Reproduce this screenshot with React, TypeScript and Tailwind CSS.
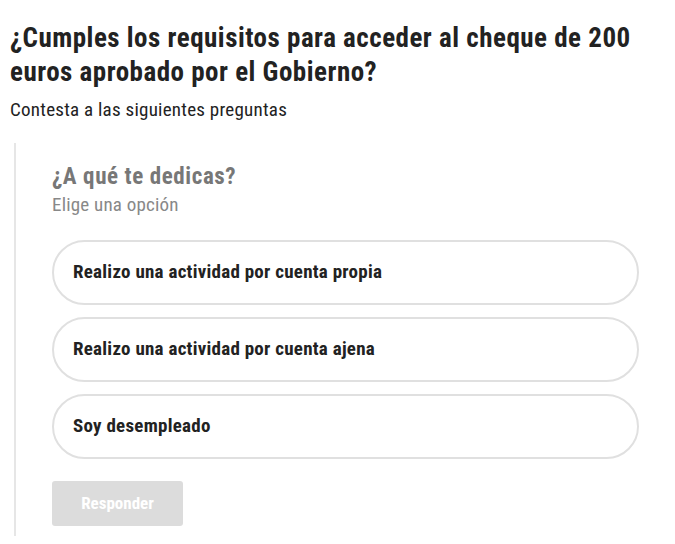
const options = [
  "Realizo una actividad por cuenta propia",
  "Realizo una actividad por cuenta ajena",
  "Soy desempleado",
];

export default function App() {
  return (
    <div className="min-h-[544px] bg-white font-['Roboto_Condensed',Roboto,sans-serif] text-[#222]">
      <div className="px-[10px] pt-[21px]">
        <h1 className="text-[27px] font-bold leading-[34px] tracking-[0.5px] text-[#222]">
          ¿Cumples los requisitos para acceder al cheque de 200 euros aprobado por el Gobierno?
        </h1>
        <p className="mt-[10px] text-[19px] leading-[22px] tracking-[0.25px] text-[#222]">
          Contesta a las siguientes preguntas
        </p>
      </div>

      {/* pregunta */}
      <div className="ml-[14px] mt-[22px] border-l-2 border-[#e6e6e6] pl-[36px] pr-[36px] pt-[20px] pb-[10px]">
        <h2 className="text-[23px] font-bold leading-[28px] tracking-[0.6px] text-[#777]">¿A qué te dedicas?</h2>
        <p className="mt-[3px] text-[19px] leading-[22px] tracking-[0.2px] text-[#888]">Elige una opción</p>

        <div className="mt-[24px] flex flex-col gap-[12px]">
          {options.map((o) => (
            <button
              key={o}
              className="flex h-[65px] w-full items-center rounded-full border-2 border-[#e0e0e0] bg-white px-[19px] text-left text-[19px] font-bold tracking-[0.25px] text-[#222]"
            >
              {o}
            </button>
          ))}
        </div>

        <button className="mt-[22px] h-[45px] w-[131px] rounded-[3px] bg-[#dcdcdc] text-[17px] font-bold text-white">
          Responder
        </button>
      </div>
    </div>
  );
}
